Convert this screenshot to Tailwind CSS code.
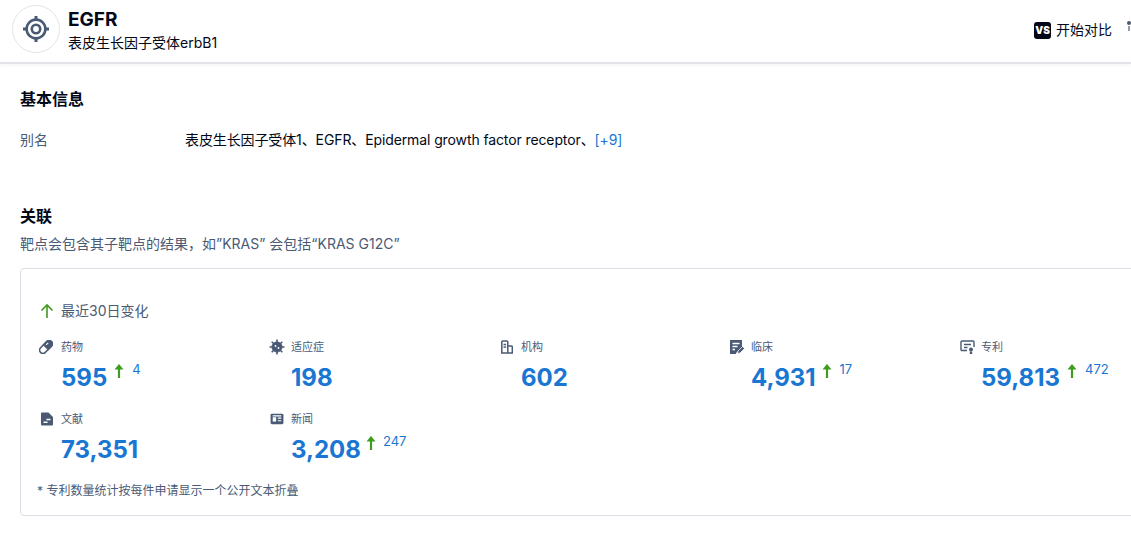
<!DOCTYPE html>
<html lang="zh">
<head>
  <meta charset="UTF-8" />
  <title>EGFR</title>
  <script src="https://cdn.jsdelivr.net/npm/@tailwindcss/browser@4"></script>
</head>
<body class="bg-white h-[535px] w-[1131px] overflow-hidden font-['Inter','Noto_Sans_CJK_SC',sans-serif] text-[#020817]">
  <!-- header -->
  <header class="h-[64px] flex items-start pl-3 border-b-2 border-[#e2e4ea] shadow-[0_2px_3px_rgba(0,0,0,0.04)] relative overflow-hidden">
    <div class="mt-[5px] w-[48px] h-[48px] rounded-full border border-[#e2e4ea] flex items-center justify-center text-[#4a5a75] shrink-0">
      <svg width="28" height="28" viewBox="0 0 28 28" fill="none" stroke="currentColor">
        <circle cx="14" cy="14" r="9.4" stroke-width="2.6" />
        <circle cx="14" cy="14" r="4.2" stroke-width="2.6" />
        <path d="M14 1v5M14 22v5M1 14h5M22 14h5" stroke-width="3" />
      </svg>
    </div>
    <div class="ml-[8px] mt-[8px]">
      <div class="text-[19px] leading-[24px] font-bold">EGFR</div>
      <div class="text-[14px] leading-[20px] mt-[1px]">表皮生长因子受体erbB1</div>
    </div>
    <div class="ml-auto mt-[20px] flex items-center text-[14px] leading-[20px] shrink-0">
      <span class="w-[17px] h-[17px] rounded-[3px] bg-[#020817] text-white text-[10px] font-black flex items-center justify-center">VS</span>
      <span class="ml-[5px]">开始对比</span>
      <span class="ml-[15px] w-[4px] h-[20px] flex flex-col items-center">
        <span class="w-[4px] h-[4px] mt-[1px] rounded-full bg-[#4a5a75]"></span>
        <span class="w-[2px] h-[5px] mt-[1px] bg-[#4a5a75]/60"></span>
      </span>
    </div>
  </header>

  <main class="px-5">
    <h2 class="mt-[24px] text-[16px] leading-[22px] font-semibold">基本信息</h2>
    <div class="mt-[20px] flex text-[14px] leading-[20px]">
      <div class="w-[165px] text-[#4a5a75]">别名</div>
      <div class="tracking-[-0.11px]">表皮生长因子受体1、EGFR、Epidermal growth factor receptor、<span class="text-[#1976d2]">[+9]</span></div>
    </div>

    <h2 class="mt-[55px] text-[16px] leading-[22px] font-semibold">关联</h2>
    <p class="mt-[7px] text-[14px] leading-[20px] text-[#4a5a75]">靶点会包含其子靶点的结果，如”KRAS” 会包括“KRAS G12C”</p>

    <section class="mt-[14px] w-[1140px] h-[248px] border border-[#dcdfe5] rounded pl-[18px] pt-[32px]">
      <div class="flex items-center text-[14px] leading-[20px] text-[#4a5a75]">
        <svg width="16" height="16" viewBox="0 0 16 16" fill="none" stroke="#3f9c1f" stroke-width="1.6"><path d="M8 15V2M2.5 7.5 8 2l5.5 5.5" /></svg>
        <span class="ml-[6px]">最近30日变化</span>
      </div>

      <div class="mt-[18px] grid grid-cols-[repeat(5,230px)] gap-y-[16px] text-[#4a5a75]">
        <!-- 药物 -->
        <div class="h-[56px]">
          <div class="flex items-center text-[11px] leading-[16px]">
            <svg width="14" height="14" viewBox="0 0 14 14" fill="none" stroke="currentColor" stroke-width="1.5"><g transform="rotate(-45 7 7)"><rect x="-0.6" y="3.7" width="15.2" height="6.6" rx="3.3" /><path d="M7 3.7h4.3a3.3 3.3 0 0 1 0 6.6H7z" fill="currentColor" /><path d="M8.5 5.6h3" stroke="#fff" stroke-width="1" /></g></svg>
            <span class="ml-[8px]">药物</span>
          </div>
          <div class="ml-[22px] mt-[5px] flex items-start text-[#1976d2]">
            <span class="text-[24px] leading-[32px] mt-[2px] font-bold">595</span>
            <svg class="ml-[6px]" width="12" height="18" viewBox="0 0 12 18" fill="#3f9c1f"><path d="M6 4 10.5 9.5H7.1V18H4.9V9.5H1.5Z" /></svg>
            <span class="ml-[7px] text-[13px] leading-[18px]">4</span>
          </div>
        </div>
        <!-- 适应症 -->
        <div class="h-[56px]">
          <div class="flex items-center text-[11px] leading-[16px]">
            <svg width="16" height="16" viewBox="0 0 16 16" fill="currentColor" stroke="currentColor"><circle cx="8" cy="8" r="5" /><path d="M8 0.5v15M0.5 8h15M2.7 2.7l10.6 10.6M13.3 2.7 2.7 13.3" stroke-width="1.6" /><circle cx="6.5" cy="7" r="0.9" fill="#fff" stroke="none" /><circle cx="9.5" cy="9" r="0.9" fill="#fff" stroke="none" /></svg>
            <span class="ml-[6px]">适应症</span>
          </div>
          <div class="ml-[22px] mt-[5px] flex items-start text-[#1976d2]">
            <span class="text-[24px] leading-[32px] mt-[2px] font-bold">198</span>
          </div>
        </div>
        <!-- 机构 -->
        <div class="h-[56px]">
          <div class="flex items-center text-[11px] leading-[16px]">
            <svg class="ml-[2px]" width="12" height="14" viewBox="1 0 12 14" fill="none" stroke="currentColor" stroke-width="1.5"><path d="M1.8 13V2a1 1 0 0 1 1-1h4a1 1 0 0 1 1 1v11zM7.8 6h3.5a1 1 0 0 1 1 1v6H7.8z" /><path d="M3.5 4.5h2.6M3.5 7h2.6" /></svg>
            <span class="ml-[8px]">机构</span>
          </div>
          <div class="ml-[22px] mt-[5px] flex items-start text-[#1976d2]">
            <span class="text-[24px] leading-[32px] mt-[2px] font-bold">602</span>
          </div>
        </div>
        <!-- 临床 -->
        <div class="h-[56px]">
          <div class="flex items-center text-[11px] leading-[16px]">
            <svg width="16" height="16" viewBox="0 0 16 16" fill="currentColor"><path d="M1 1h12v7l-6 6v1H1z" /><path d="M3.5 4.5h7M3.5 7.5h5M3.5 10.5h2.5" stroke="#fff" stroke-width="1.3" /><path d="M8.5 14.5 9 12l4.5-4.5 2 2L11 14z" stroke="#fff" stroke-width="0.7" /></svg>
            <span class="ml-[6px]">临床</span>
          </div>
          <div class="ml-[22px] mt-[5px] flex items-start text-[#1976d2]">
            <span class="text-[24px] leading-[32px] mt-[2px] font-bold">4,931</span>
            <svg class="ml-[5px]" width="12" height="18" viewBox="0 0 12 18" fill="#3f9c1f"><path d="M6 4 10.5 9.5H7.1V18H4.9V9.5H1.5Z" /></svg>
            <span class="ml-[7px] text-[13px] leading-[18px]">17</span>
          </div>
        </div>
        <!-- 专利 -->
        <div class="h-[56px]">
          <div class="flex items-center text-[11px] leading-[16px]">
            <svg width="16" height="16" viewBox="0 0 16 16" fill="none" stroke="currentColor" stroke-width="1.4"><path d="M8 11.5H3a1 1 0 0 1-1-1V3a1 1 0 0 1 1-1h11a1 1 0 0 1 1 1v5" /><path d="M5 5.5h7M5 8.5h3.5" /><circle cx="12" cy="10.5" r="2" fill="currentColor" stroke="none" /><path d="M10.8 12.5h2.4v2.5h-2.4z" fill="currentColor" stroke="none" /></svg>
            <span class="ml-[6px]">专利</span>
          </div>
          <div class="ml-[22px] mt-[5px] flex items-start text-[#1976d2]">
            <span class="text-[24px] leading-[32px] mt-[2px] font-bold">59,813</span>
            <svg class="ml-[6px]" width="12" height="18" viewBox="0 0 12 18" fill="#3f9c1f"><path d="M6 4 10.5 9.5H7.1V18H4.9V9.5H1.5Z" /></svg>
            <span class="ml-[7px] text-[13px] leading-[18px]">472</span>
          </div>
        </div>
        <!-- 文献 -->
        <div class="h-[56px]">
          <div class="flex items-center text-[11px] leading-[16px]">
            <svg class="ml-[1px]" width="14" height="14" viewBox="0 0 14 14" fill="currentColor"><path d="M2 0.5h6.5L13 5V12.5a1 1 0 0 1-1 1H2a1 1 0 0 1-1-1V1.5a1 1 0 0 1 1-1z" /><path d="M6.5 7.5h4M3.5 10.2h4" stroke="#fff" stroke-width="1.4" /></svg>
            <span class="ml-[7px]">文献</span>
          </div>
          <div class="ml-[22px] mt-[5px] flex items-start text-[#1976d2]">
            <span class="text-[24px] leading-[32px] mt-[2px] font-bold">73,351</span>
          </div>
        </div>
        <!-- 新闻 -->
        <div class="h-[56px]">
          <div class="flex items-center text-[11px] leading-[16px]">
            <svg class="ml-[1px]" width="14" height="12" viewBox="0 0 16 14" fill="currentColor"><rect x="0.5" y="1" width="15" height="12" rx="1.5" /><rect x="3" y="5" width="4" height="5" fill="#fff" /><path d="M3 3.3h10M9 6h4M9 9h4" stroke="#fff" stroke-width="1.3" /></svg>
            <span class="ml-[7px]">新闻</span>
          </div>
          <div class="ml-[22px] mt-[5px] flex items-start text-[#1976d2]">
            <span class="text-[24px] leading-[32px] mt-[2px] font-bold">3,208</span>
            <svg class="ml-[4px]" width="12" height="18" viewBox="0 0 12 18" fill="#3f9c1f"><path d="M6 4 10.5 9.5H7.1V18H4.9V9.5H1.5Z" /></svg>
            <span class="ml-[6px] text-[13px] leading-[18px]">247</span>
          </div>
        </div>
      </div>

      <p class="mt-[16px] -ml-[2px] text-[12px] leading-[16px] text-[#4a5a75]">* 专利数量统计按每件申请显示一个公开文本折叠</p>
    </section>
  </main>
</body>
</html>
